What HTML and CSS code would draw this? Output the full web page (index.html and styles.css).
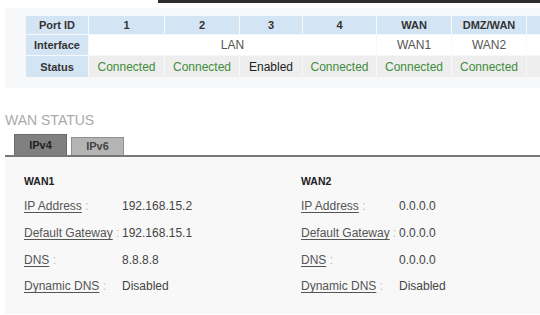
FILE: index.html
```html
<!DOCTYPE html>
<html>
<head>
<meta charset="utf-8">
<link rel="stylesheet" href="styles.css">
</head>
<body>
<div class="topbar"></div>
<div class="portpanel">
  <table class="ports">
    <tr class="hdr">
      <th class="lbl">Port ID</th>
      <th class="c1">1</th>
      <th class="c2">2</th>
      <th class="c3">3</th>
      <th class="c4">4</th>
      <th class="c5">WAN</th>
      <th class="c6">DMZ/WAN</th>
      <th class="c7"></th>
    </tr>
    <tr class="iface">
      <th class="lbl">Interface</th>
      <td colspan="4">LAN</td>
      <td>WAN1</td>
      <td>WAN2</td>
      <td></td>
    </tr>
    <tr class="status">
      <th class="lbl">Status</th>
      <td class="ok">Connected</td>
      <td class="ok">Connected</td>
      <td class="en">Enabled</td>
      <td class="ok">Connected</td>
      <td class="ok">Connected</td>
      <td class="ok">Connected</td>
      <td></td>
    </tr>
  </table>
</div>

<h2 class="title">WAN STATUS</h2>
<div class="tabs">
  <div class="tab active">IPv4</div>
  <div class="tab">IPv6</div>
</div>
<div class="content">
  <div class="wan">
    <div class="wanname">WAN1</div>
    <div class="row"><span class="k"><u>IP Address</u> <i>:</i></span><span class="v">192.168.15.2</span></div>
    <div class="row"><span class="k"><u>Default Gateway</u> <i>:</i></span><span class="v">192.168.15.1</span></div>
    <div class="row"><span class="k"><u>DNS</u> <i>:</i></span><span class="v">8.8.8.8</span></div>
    <div class="row"><span class="k"><u>Dynamic DNS</u> <i>:</i></span><span class="v">Disabled</span></div>
  </div>
  <div class="wan">
    <div class="wanname">WAN2</div>
    <div class="row"><span class="k"><u>IP Address</u> <i>:</i></span><span class="v">0.0.0.0</span></div>
    <div class="row"><span class="k"><u>Default Gateway</u> <i>:</i></span><span class="v">0.0.0.0</span></div>
    <div class="row"><span class="k"><u>DNS</u> <i>:</i></span><span class="v">0.0.0.0</span></div>
    <div class="row"><span class="k"><u>Dynamic DNS</u> <i>:</i></span><span class="v">Disabled</span></div>
  </div>
</div>
</body>
</html>
```
FILE: styles.css
```css
html, body {
  margin: 0;
  padding: 0;
  background: #ffffff;
  overflow: hidden;
  width: 540px;
  height: 315px;
}
body {
  font-family: "Liberation Sans", Arial, sans-serif;
  color: #444;
}
.topbar {
  margin-left: 158px;
  height: 3px;
  background: #2e2e2e;
}
.portpanel {
  margin: 5px 0 0 5px;
  background: #f6f8fa;
  padding: 7px 0 10px 20px;
  overflow: hidden;
}
.ports {
  border-collapse: separate;
  border-spacing: 1px;
  table-layout: fixed;
  width: 543px;
}
.ports th, .ports td {
  padding: 0;
  text-align: center;
  white-space: nowrap;
  overflow: hidden;
}
.ports th {
  font-size: 11px;
  font-weight: bold;
  color: #333;
}
.ports .lbl { width: 62px; background: #d3e4f5; }
.ports .c1 { width: 75px; }
.ports .c2 { width: 74px; }
.ports .c3 { width: 62px; }
.ports .c4 { width: 73px; }
.ports .c5 { width: 74px; }
.ports .c6 { width: 74px; }
.ports .c7 { width: 40px; }
.hdr th { background: #d3e4f5; height: 18px; }
.iface td {
  height: 20px;
  background: #ffffff;
  font-size: 12px;
  color: #555;
}
.status td {
  height: 21px;
  background: #eeeeee;
  font-size: 12px;
}
.status .ok { color: #3f8c3a; }
.status .en { color: #222; }

.title {
  margin: 24px 0 0 5px;
  font-size: 14px;
  font-weight: normal;
  color: #aaaaaa;
  line-height: 16px;
  height: 16px;
}
.tabs {
  display: flex;
  align-items: flex-end;
  gap: 4px;
  margin: 5px 0 0 5px;
  padding: 0 0 0 9px;
  height: 22px;
  border-bottom: 2px solid #777;
}
.tab {
  width: 51px;
  height: 17px;
  line-height: 17px;
  text-align: center;
  font-size: 11px;
  font-weight: bold;
  color: #444;
  background: #b4b4b4;
  border: 1px solid #8e8e8e;
  border-bottom: none;
}
.tab.active {
  height: 20px;
  line-height: 20px;
  background: #808080;
  color: #222;
  border-color: #6a6a6a;
}
.content {
  box-sizing: border-box;
  margin-left: 5px;
  background: #f8f8f8;
  height: 157px;
  display: grid;
  grid-template-columns: 277px 1fr;
  padding: 15px 0 0 19px;
}
.wanname {
  font-size: 10.5px;
  font-weight: bold;
  color: #222;
  height: 18px;
  line-height: 18px;
  margin-bottom: 3px;
}
.row {
  display: flex;
  height: 26.7px;
  align-items: center;
  font-size: 12px;
}
.k {
  width: 98px;
  color: #555;
  white-space: nowrap;
}
.k u { text-decoration: underline; text-underline-offset: 2px; }
.k i { font-style: normal; color: #bbb; }
.v { color: #444; }
```
